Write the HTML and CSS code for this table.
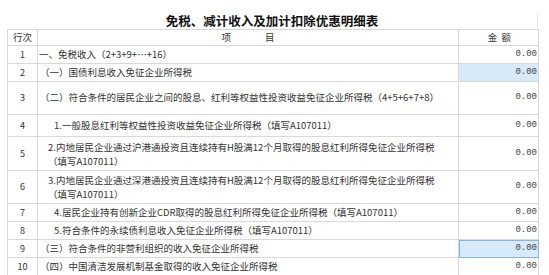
FILE: index.html
```html
<!DOCTYPE html>
<html lang="zh-CN">
<head>
<meta charset="utf-8">
<title>免税、减计收入及加计扣除优惠明细表</title>
<link rel="stylesheet" href="styles.css">
</head>
<body>
<div class="sheet">
  <div class="title">免税、减计收入及加计扣除优惠明细表</div>
  <table class="grid">
    <colgroup>
      <col class="c-no">
      <col class="c-item">
      <col class="c-amt">
    </colgroup>
    <thead>
      <tr class="head">
        <th class="no">行次</th>
        <th class="item-h"><span>项</span><span>目</span></th>
        <th class="amt-h">金&nbsp;&nbsp;额</th>
      </tr>
    </thead>
    <tbody>
      <tr class="r18">
        <td class="no">1</td>
        <td class="item l0">一、免税收入（2+3+9+…+16）</td>
        <td class="amt">0.00</td>
      </tr>
      <tr class="r18">
        <td class="no">2</td>
        <td class="item l1">（一）国债利息收入免征企业所得税</td>
        <td class="amt sel">0.00</td>
      </tr>
      <tr class="r33">
        <td class="no">3</td>
        <td class="item l1">（二）符合条件的居民企业之间的股息、红利等权益性投资收益免征企业所得税（4+5+6+7+8）</td>
        <td class="amt">0.00</td>
      </tr>
      <tr class="r22">
        <td class="no">4</td>
        <td class="item l3">1.一般股息红利等权益性投资收益免征企业所得税（填写A107011）</td>
        <td class="amt">0.00</td>
      </tr>
      <tr class="r34">
        <td class="no">5</td>
        <td class="item l2 two"><span class="ln">2.内地居民企业通过沪港通投资且连续持有H股满12个月取得的股息红利所得免征企业所得税</span><span class="ln">（填写A107011）</span></td>
        <td class="amt">0.00</td>
      </tr>
      <tr class="r33">
        <td class="no">6</td>
        <td class="item l2 two"><span class="ln">3.内地居民企业通过深港通投资且连续持有H股满12个月取得的股息红利所得免征企业所得税</span><span class="ln">（填写A107011）</span></td>
        <td class="amt">0.00</td>
      </tr>
      <tr class="r18">
        <td class="no">7</td>
        <td class="item l3">4.居民企业持有创新企业CDR取得的股息红利所得免征企业所得税（填写A107011）</td>
        <td class="amt">0.00</td>
      </tr>
      <tr class="r18">
        <td class="no">8</td>
        <td class="item l3">5.符合条件的永续债利息收入免征企业所得税（填写A107011）</td>
        <td class="amt">0.00</td>
      </tr>
      <tr class="r18">
        <td class="no">9</td>
        <td class="item l1">（三）符合条件的非营利组织的收入免征企业所得税</td>
        <td class="amt sel focus">0.00</td>
      </tr>
      <tr class="r18">
        <td class="no">10</td>
        <td class="item l1">（四）中国清洁发展机制基金取得的收入免征企业所得税</td>
        <td class="amt">0.00</td>
      </tr>
    </tbody>
  </table>
</div>
</body>
</html>
```
FILE: styles.css
```css
html, body {
  margin: 0;
  padding: 0;
  background: #ffffff;
}

body {
  font-family: "Noto Sans CJK SC", "Noto Sans", sans-serif;
  color: #333333;
  overflow: hidden;
}

.sheet {
  width: 531px;
  margin-left: 7px;
  padding-top: 13px;
}

.title {
  height: 16px;
  line-height: 16px;
  text-align: center;
  font-size: 12.5px;
  font-weight: bold;
  color: #111111;
  border-right: 1px solid #e4e4e4;
  box-sizing: border-box;
}

.grid {
  width: 531px;
  border-collapse: collapse;
  table-layout: fixed;
  font-size: 9.5px;
}

.c-no { width: 30px; }
.c-item { width: 421px; }
.c-amt { width: 80px; }

.grid th,
.grid td {
  border: 1px solid #d9d9d9;
  padding: 0;
  vertical-align: middle;
  line-height: 11.5px;
}

.grid .two .ln {
  display: block;
  line-height: 14px;
}

.grid .head {
  height: 16px;
}

.grid .head th {
  font-weight: normal;
  color: #333333;
  font-size: 9.5px;
}

.grid .item-h {
  text-align: center;
}

.item-h span + span {
  margin-left: 34px;
}

.grid .amt-h {
  text-align: center;
  padding-left: 2px;
}

.r18 { height: 18px; }
.r22 { height: 22px; }
.r33 { height: 33px; }
.r34 { height: 34px; }

.grid .no {
  text-align: center;
  font-size: 9px;
}

.grid .head .no {
  font-size: 9.5px;
}

.grid .item {
  white-space: nowrap;
}

.grid .l0 { padding-left: 1px; }
.grid .l1 { padding-left: 2px; }
.grid .l2 { padding-left: 10px; }
.grid .l3 { padding-left: 16px; }

.grid .amt {
  text-align: right;
  padding-right: 1px;
  font-family: "Liberation Mono", "DejaVu Sans Mono", monospace;
  font-size: 9px;
  color: #444444;
}

.grid .sel {
  background: #d6eafa;
}

.grid .focus {
  outline: 1px solid #84b5e6;
  outline-offset: -1px;
}
```
